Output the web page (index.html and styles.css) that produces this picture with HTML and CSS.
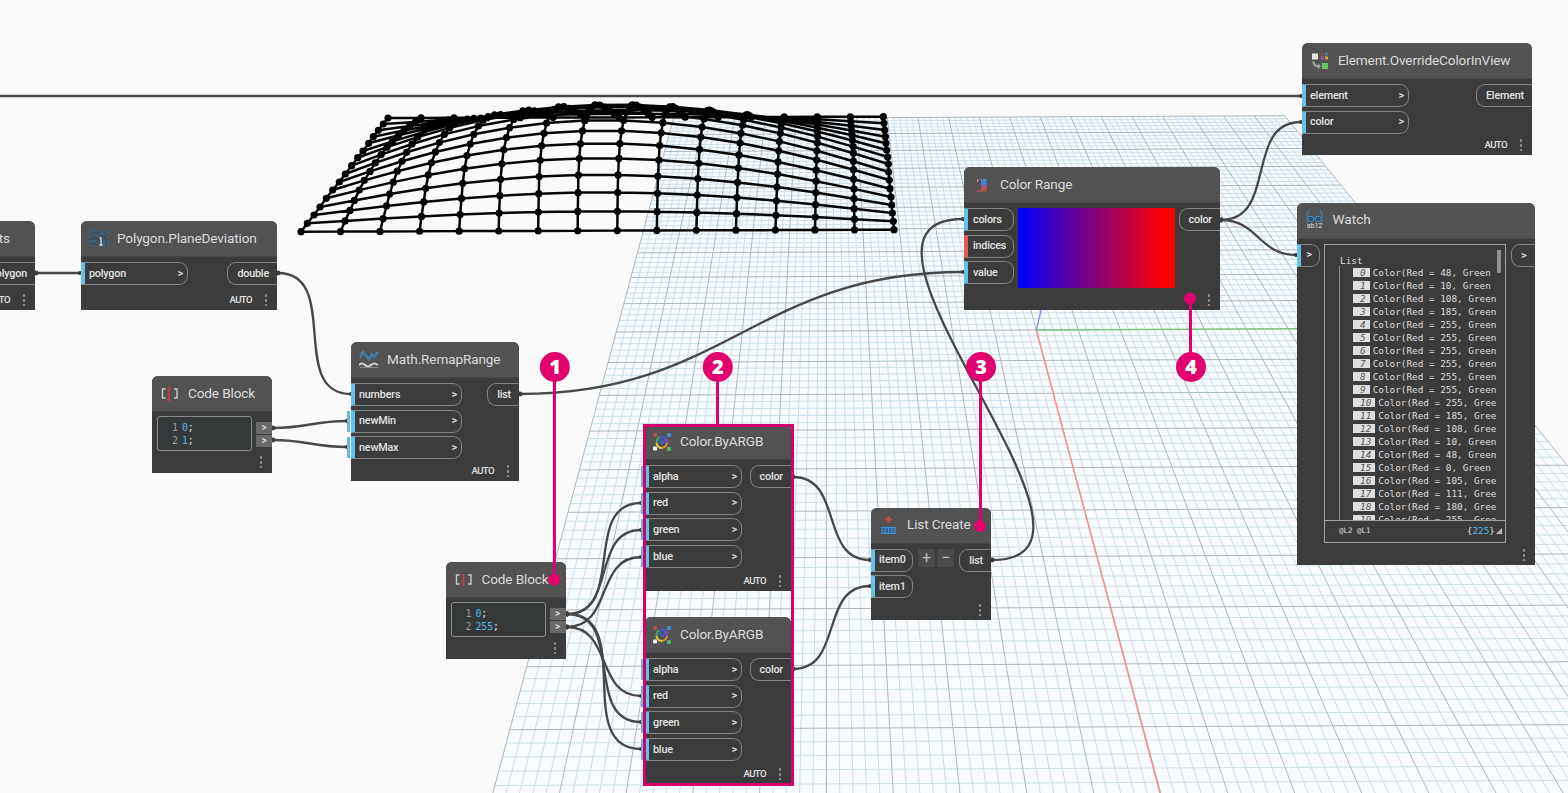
FILE: index.html
```html
<!DOCTYPE html>
<html lang="en">
<head>
<meta charset="utf-8">
<title>Graph workspace</title>
<link rel="stylesheet" href="styles.css">
</head>
<body>
<main class="workspace">
<svg class="layer" width="1568" height="793" viewBox="0 0 1568 793">
  <path id="plane" class="plane"/>
  <path id="minor-across" class="minor across"/>
  <path id="minor-deep" class="minor deep"/>
  <path id="major" class="major"/>
  <path class="axis-x" d="M1036.3 330L1160 793"/>
  <path class="axis-y" d="M1036.3 330L1456 328"/>
  <path class="axis-z" d="M1036.3 330L1046 290"/>
  <path id="mesh-lines" class="mesh-lines"/>
  <path id="mesh-dots" class="mesh-dots"/>
  <g id="wires" class="wires"></g>
</svg>

<section class="node n-points">
  <header><h2>ts</h2></header>
  <div class="ports"><div class="outs"><span class="out">polygon</span></div></div>
  <footer><b>AUTO</b><i class="dots"></i></footer>
</section>

<section class="node n-deviation">
  <header><svg class="icon" viewBox="0 0 20 20"><rect x="1" y="2" width="18" height="15" fill="#43505b" stroke="#38698e" stroke-dasharray="3 1.5"/><path d="M3 7l3-2 3 3 4-4 4 2M2 12h5M15 11v5" fill="none" stroke="#3f7096"/><path d="M12 9v7M10.500 9h2M10.500 16h3" stroke="#ddd" stroke-width="1.3"/></svg><h2>Polygon.PlaneDeviation</h2></header>
  <div class="ports"><div class="ins"><span class="in">polygon<em>&gt;</em></span></div><div class="outs"><span class="out">double</span></div></div>
  <footer><b>AUTO</b><i class="dots"></i></footer>
</section>

<section class="node n-remap">
  <header><svg class="icon" viewBox="0 0 20 20"><path d="M1 8l3-6 3 3 3 5 3-6 2 3 4-5" fill="none" stroke="#4380ae" stroke-width="2"/><path d="M1 3h3M9 7h3M16 3h3" stroke="#4380ae"/><path d="M0 15q3-3 6 0t6 0 7 0" fill="none" stroke="#d0d0d0" stroke-width="2"/><path d="M1 17.500h18" stroke="#8b8b8b"/></svg><h2>Math.RemapRange</h2></header>
  <div class="ports"><div class="ins"><span class="in">numbers<em>&gt;</em></span><span class="in default">newMin<em>&gt;</em></span><span class="in default">newMax<em>&gt;</em></span></div><div class="outs"><span class="out">list</span></div></div>
  <footer><b>AUTO</b><i class="dots"></i></footer>
</section>

<section class="node code n-code1">
  <header><svg class="icon" viewBox="0 0 20 20"><path d="M5.500 5H2.500v9h3M14 5h3v9h-3" fill="none" stroke="#c9c9c9" stroke-width="1.4"/><path d="M7.500 4h3M9 4v12M7.500 16h3" fill="none" stroke="#d23b42" stroke-width="1.5"/></svg><h2>Code Block</h2></header>
  <div class="ports"><pre class="editor"><s>1</s><u>0</u>;
<s>2</s><u>1</u>;</pre><div class="codeouts"><span>&gt;</span><span>&gt;</span></div></div>
  <footer><i class="dots"></i></footer>
</section>

<section class="node code n-code2">
  <header><svg class="icon" viewBox="0 0 20 20"><path d="M5.500 5H2.500v9h3M14 5h3v9h-3" fill="none" stroke="#c9c9c9" stroke-width="1.4"/><path d="M9.500 4v12" fill="none" stroke="#d23b42" stroke-width="1.6"/></svg><h2>Code Block</h2></header>
  <div class="ports"><pre class="editor"><s>1</s><u>0</u>;
<s>2</s><u>255</u>;</pre><div class="codeouts"><span>&gt;</span><span>&gt;</span></div></div>
  <footer><i class="dots"></i></footer>
</section>

<section class="node argb n-argb1">
  <header><svg class="icon" viewBox="0 0 20 20"><rect x="1" y="1" width="4" height="4" rx="1" fill="#b84a4a"/><rect x="15" y="1" width="4" height="4" rx="1" fill="#3f8fd0"/><rect x="1" y="14.500" width="4" height="4" rx="1" fill="#eee"/><rect x="15" y="15" width="4" height="4" rx="1" fill="#52b65a"/><path d="M7 5Q4.500 7 4.500 11" fill="none" stroke="#3fae55" stroke-width="1.800"/><path d="M4.500 11q1 5 5.500 5" fill="none" stroke="#e0c93a" stroke-width="2"/><path d="M10 16q4.500-1 5-5" fill="none" stroke="#dd9a33" stroke-width="2"/><path d="M15 11q0-3-1.500-5" fill="none" stroke="#a540c0" stroke-width="1.800"/><path d="M8 4.500q4-.5 4.500 2t-1.500 5q-3-1-3-6" fill="none" stroke="#375fe0" stroke-width="1.800"/></svg><h2>Color.ByARGB</h2></header>
  <div class="ports"><div class="ins"><span class="in default">alpha<em>&gt;</em></span><span class="in default">red<em>&gt;</em></span><span class="in default">green<em>&gt;</em></span><span class="in default">blue<em>&gt;</em></span></div><div class="outs"><span class="out">color</span></div></div>
  <footer><b>AUTO</b><i class="dots"></i></footer>
</section>

<section class="node argb n-argb2">
  <header><svg class="icon" viewBox="0 0 20 20"><rect x="1" y="1" width="4" height="4" rx="1" fill="#b84a4a"/><rect x="15" y="1" width="4" height="4" rx="1" fill="#3f8fd0"/><rect x="1" y="14.500" width="4" height="4" rx="1" fill="#eee"/><rect x="15" y="15" width="4" height="4" rx="1" fill="#52b65a"/><path d="M7 5Q4.500 7 4.500 11" fill="none" stroke="#3fae55" stroke-width="1.800"/><path d="M4.500 11q1 5 5.500 5" fill="none" stroke="#e0c93a" stroke-width="2"/><path d="M10 16q4.500-1 5-5" fill="none" stroke="#dd9a33" stroke-width="2"/><path d="M15 11q0-3-1.500-5" fill="none" stroke="#a540c0" stroke-width="1.800"/><path d="M8 4.500q4-.5 4.500 2t-1.500 5q-3-1-3-6" fill="none" stroke="#375fe0" stroke-width="1.800"/></svg><h2>Color.ByARGB</h2></header>
  <div class="ports"><div class="ins"><span class="in default">alpha<em>&gt;</em></span><span class="in default">red<em>&gt;</em></span><span class="in default">green<em>&gt;</em></span><span class="in default">blue<em>&gt;</em></span></div><div class="outs"><span class="out">color</span></div></div>
  <footer><b>AUTO</b><i class="dots"></i></footer>
</section>

<section class="node n-list">
  <header><svg class="icon" viewBox="0 0 20 20"><path d="M9.500 1v7M6 4.500h7" stroke="#c94a44" stroke-width="2"/><rect x="3" y="12" width="13" height="6.500" fill="#2f6294"/><path d="M2 12.500h15M2 18.500h15M3 12v6M6.300 12v6M9.600 12v6M12.900 12v6M16 12v6" stroke="#4a8fcd" stroke-width="1"/></svg><h2>List Create</h2></header>
  <div class="ports"><div class="ins"><span class="in">item0</span><span class="in">item1</span></div><div class="stepper"><span>+</span><span>−</span></div><div class="outs"><span class="out">list</span></div></div>
  <footer><i class="dots"></i></footer>
</section>

<section class="node n-range">
  <header><svg class="icon" viewBox="0 0 20 20"><path d="M5 4.500h5M5 16h5" stroke="#d5554f" stroke-width="1.200"/><path d="M5.500 5v2" stroke="#bbb"/><rect x="9" y="4" width="5.500" height="6" fill="#4385c6"/><rect x="9" y="9" width="5.500" height="4" fill="#81629b"/><rect x="9" y="12" width="5.500" height="4.500" fill="#ca4c50"/></svg><h2>Color Range</h2></header>
  <div class="ports"><div class="ins"><span class="in">colors</span><span class="in missing">indices</span><span class="in">value</span></div><div class="ramp"></div><div class="outs"><span class="out">color</span></div></div>
  <footer><i class="dots"></i></footer>
</section>

<section class="node n-override">
  <header><svg class="icon" viewBox="0 0 20 20"><rect x="2" y="2.500" width="6" height="6" fill="#e4e4e4"/><rect x="11" y="1.500" width="3" height="3" fill="#8a4b4b"/><rect x="15" y="1.500" width="3" height="3" fill="#4d7797"/><rect x="11" y="5.500" width="3" height="3" fill="#a0559c"/><rect x="15" y="5.500" width="3" height="3" fill="#c5a73b"/><rect x="12" y="12" width="6" height="6" fill="#62c462"/><path d="M3 10.500q1 5 7 5" fill="none" stroke="#a9a9a9" stroke-width="2"/><path d="M8 12.500l3 3-3 2.500z" fill="#a9a9a9"/></svg><h2>Element.OverrideColorInView</h2></header>
  <div class="ports"><div class="ins"><span class="in">element<em>&gt;</em></span><span class="in">color<em>&gt;</em></span></div><div class="outs"><span class="out">Element</span></div></div>
  <footer><b>AUTO</b><i class="dots"></i></footer>
</section>

<section class="node n-watch">
  <header><svg class="icon" viewBox="0 0 20 20"><path d="M5 1H3.500L2 4v10M14 1h1.500L17 4v10" fill="none" stroke="#3e82ab" stroke-width="1.200"/><rect x="3" y="6.500" width="5.500" height="5" rx="1.500" fill="#35536a" stroke="#4389b8"/><rect x="10.500" y="6.500" width="5.500" height="5" rx="1.500" fill="#35536a" stroke="#4389b8"/><path d="M8 8h3" stroke="#4389b8"/><text x="9.500" y="18" text-anchor="middle" font-family="Roboto, sans-serif" font-size="7" fill="#ddd">ab12</text></svg><h2>Watch</h2></header>
  <div class="ports"><div class="ins"><span class="in"><em>&gt;</em></span></div>
    <div class="viewer"><div class="list"><p>List</p><ol id="values"></ol><i class="thumb"></i></div>
    <div class="levels"><span>@L2 @L1</span><span class="count">{<u>225</u>}<i></i></span></div></div>
    <div class="outs"><span class="out"><em>&gt;</em></span></div></div>
  <footer><i class="dots"></i></footer>
</section>

<svg class="layer callouts" width="1568" height="793" viewBox="0 0 1568 793">
  <rect x="644.500" y="425.500" width="148" height="359" class="frame"/>
  <path class="stems" d="M554.500 367V579M717.500 367V425M980.500 367V526M1190.500 367V299"/>
  <circle cx="554.300" cy="579.500" r="6"/><circle cx="980" cy="526" r="6"/><circle cx="1190" cy="298.500" r="6"/>
  <circle cx="554.800" cy="367" r="15"/><circle cx="717.800" cy="367" r="15"/><circle cx="981" cy="367" r="15"/><circle cx="1191" cy="367" r="15"/>
  <text x="555" y="374">1</text><text x="717.800" y="374">2</text><text x="981" y="374">3</text><text x="1191" y="374">4</text>
</svg>
</main>
<script src="script.js"></script>
</body>
</html>
```
FILE: styles.css
```css
* { box-sizing: border-box; }
body { margin: 0; background: #fafafa; font-family: Roboto, "Noto Sans", sans-serif; overflow: hidden; }
.workspace { position: relative; width: 1568px; height: 793px; overflow: hidden; }
.layer { position: absolute; inset: 0; }
.layer path { fill: none; }
.layer .plane { fill: #f8fcfe; }
.minor { stroke-width: 1; }
.minor.across { stroke: #cbdfea; }
.minor.deep { stroke: #d0dde4; }
.major { stroke: #adb8be; stroke-width: 1; }
.axis-x { stroke: #ff8a8c; stroke-width: 1.5; }
.axis-y { stroke: #7cc576; stroke-width: 1.4; }
.axis-z { stroke: #8f8ff5; stroke-width: 1.4; }
.mesh-lines { stroke: #050505; stroke-width: 2.5; stroke-linejoin: round; }
.layer .mesh-dots { fill: #000; }
.wires { stroke: #484848; stroke-width: 2.3; }
.wires circle { fill: #3c3c3c; stroke: none; }

.node { position: absolute; display: flex; flex-direction: column; background: #3c3c3c; border-radius: 6px 6px 0 0; color: #e2e2e2; }
.node header { display: flex; align-items: center; gap: 8px; height: 36px; flex: none; padding-left: 8px; background: #525252; border-bottom: 1px solid #484848; border-radius: 6px 6px 0 0; }
.icon { width: 20px; height: 20px; flex: none; }
h2 { margin: 0; padding-bottom: 1px; font-size: 13.6px; line-height: 17px; font-weight: 400; letter-spacing: -.14px; color: #dadada; white-space: nowrap; }
.ports { display: flex; padding-top: 5px; min-height: 0; }
.ins, .outs { display: flex; flex-direction: column; gap: 3.7px; flex: none; }
.outs { margin-left: auto; }
.in, .out { display: flex; align-items: center; height: 23px; border: 1px solid #848484; font-size: 10.8px; font-weight: 500; letter-spacing: -.2px; white-space: nowrap; }
.in { position: relative; width: 107px; border-left: 4px solid #66c1ea; border-radius: 0 9px 9px 0; padding: 0 4px 1px 4px; }
.in em, .out em { margin-left: auto; font-style: normal; font-size: 11px; }
.in.missing { border-left-color: #e25a58; }
.in.default::before { content: ""; position: absolute; left: -8px; top: 0; width: 3px; height: 21px; background: #66b8e2; }
.out { border-right: 0; border-radius: 9px 0 0 9px; padding: 0 8px 0 9px; }
.node footer { display: flex; align-items: center; justify-content: flex-end; height: 21px; margin-top: auto; padding: 0 9px 0 0; gap: 12px; }
.node footer b { font-size: 9.6px; font-weight: 500; letter-spacing: -.6px; }
.dots { width: 4px; height: 13px; background: radial-gradient(circle, #878787 1.1px, transparent 1.6px) 0 0 / 4px 5px; }

.n-points { left: -100px; top: 221px; width: 135px; height: 89px; }
.n-points header { justify-content: flex-end; padding-right: 25px; }
.n-deviation { left: 81px; top: 221px; width: 196px; height: 89px; }
.n-remap { left: 351px; top: 342px; width: 168px; height: 139px; }
.n-remap .in { width: 111px; }
.n-code1 { left: 152px; top: 376px; width: 120px; height: 97px; }
.n-code2 { left: 445.500px; top: 562px; width: 120px; height: 97px; }
.n-argb1 { left: 645px; top: 424px; width: 146px; height: 167px; }
.n-argb2 { left: 645px; top: 617px; width: 146px; height: 167px; }
.argb .in { width: 97px; }
.argb header { padding-left: 7px; }
.n-list { left: 871px; top: 507.500px; width: 120px; height: 112px; }
.n-list .in { width: 42px; padding-right: 0; }
.n-range { left: 964px; top: 167px; width: 256px; height: 143px; }
.n-range .in { width: 50px; padding-left: 5px; }
.n-override { left: 1302px; top: 43px; width: 230px; height: 112px; }
.n-watch { left: 1296.500px; top: 202.500px; width: 238px; height: 362px; }
.n-watch .in { width: 23px; padding-left: 3px; }
.n-watch .in em { margin: 0 auto; }
.n-watch .out { width: 24px; }
.n-watch h2 { letter-spacing: 0; }

.editor { width: 95px; height: 35px; margin: 0 0 0 5px; padding: 4px 0 0 14px; border: 1px solid #8d8d8d; border-radius: 3px; background: #35393a; color: #e2e2e2; font: 9.8px/13px "DejaVu Sans Mono", monospace; }
.editor s { text-decoration: none; color: #a0a0a0; margin-right: 4px; }
.editor u, .count u { text-decoration: none; color: #55b9e5; }
.codeouts { display: flex; flex-direction: column; gap: 1px; margin: 6px 0 0 auto; }
.codeouts span { width: 16px; height: 12px; background: #696969; font: 500 10px/12px Roboto, sans-serif; text-align: center; }
.code .ports { padding-top: 4px; }
.code footer { height: 23px; }
.stepper { display: flex; gap: 2px; margin: 0 0 0 5px; }
.stepper span { width: 17px; height: 18px; background: #4b4b4b; color: #bbb; text-align: center; font-size: 16px; line-height: 17px; }
.ramp { width: 157px; height: 80px; margin-left: 4px; background: linear-gradient(90deg, #00f, #f00 93%); }

.viewer { width: 182px; height: 299px; margin-left: 4.5px; border: 1px solid #a2a2a2; font: 9.35px/13px "DejaVu Sans Mono", monospace; color: #dcdcdc; }
.list { position: relative; height: 276px; padding: 10px 9px 0 15px; overflow: hidden; border-bottom: 1px solid #a2a2a2; }
.list p { margin: 0; line-height: 11px; }
.list ol { list-style: none; margin: 0 0 0 -1px; padding: 0 0 0 13px; border-left: 1px solid #909090; height: 270px; overflow: hidden; }
.list li { display: flex; align-items: center; gap: 3px; height: 13.06px; white-space: pre; }
.list li b { flex: none; height: 9px; padding: 0 4px 0 7px; background: #dedede; color: #555; font-style: italic; font-weight: 400; line-height: 9px; }
.thumb { position: absolute; right: 4px; top: 5px; width: 4px; height: 23px; background: #909090; }
.levels { display: flex; justify-content: space-between; align-items: center; height: 20px; padding: 0 3px 0 14px; font-size: 7.5px; }
.count { display: flex; align-items: center; font-size: 9.4px; }
.count i { margin: 1px 0 0 1px; border: 3px solid transparent; border-right-color: #bbb; border-bottom-color: #bbb; }

.callouts circle { fill: #e0006e; }
.callouts .frame { fill: none; stroke: #d6006d; stroke-width: 3; }
.callouts .stems { stroke: #e0006e; stroke-width: 3; }
.callouts text { fill: #fff; font: 800 20px "Open Sans", "Noto Sans", sans-serif; text-anchor: middle; }
```
FILE: script.js
```js
// Ground plane: 20 x 20 major cells in one-point perspective.
const ground = (u, v) => {
  const w = 1 - 0.0374 * v;
  return [(1036.3 + 42 * u - 30.9 * v) / w, (330 - 0.2 * u + 16.9 * v) / w];
};
const seg = (a, b) => `M${a[0].toFixed(1)} ${a[1].toFixed(1)}L${b[0].toFixed(1)} ${b[1].toFixed(1)}`;
const set = (id, d) => document.getElementById(id).setAttribute('d', d);
let major = '', across = '', deep = '';
for (let k = -50; k <= 50; k++) {
  const c = k / 5;
  const h = seg(ground(-10, c), ground(10, c));
  const d = seg(ground(c, -10), ground(c, 10));
  if (k % 5 === 0) major += h + d;
  else { across += h; deep += d; }
}
set('major', major);
set('minor-across', across);
set('minor-deep', deep);
set('plane', 'M' + [ground(-10, -10), ground(10, -10), ground(10, 10), ground(-10, 10)].join('L') + 'Z');

// Vaulted mesh: 16 x 16 vertices, lifted by a product of sines.
const left = [[33,425],[52,400],[72,375],[90,351],[109,325],[128,300],[148,276],[166,252],[185,227],[203,203],[219,183],[236,160],[250,140],[265,121],[280,102],[294,84]];
const right = [[882,419],[880,394],[877,369],[875,345],[873,321],[870,296],[868,270],[866,246],[865,222],[863,201],[860,180],[858,160],[856,140],[854,120],[852,100],[850,80]];
const vertex = (i, j) => {
  const t = j / 15;
  const ax = 290 + left[i][0] / 3, ay = 90 + left[i][1] / 3;
  const bx = 600 + right[i][0] / 3, by = 90 + right[i][1] / 3;
  const peak = i > 10 ? 53 - (i - 10) * 1.2 : 53;
  const lift = peak * Math.sin(Math.PI * i / 15) * Math.sin(Math.PI * t);
  return [ax + (bx - ax) * t + lift * (-0.27 + 0.05 * (j - 7)), ay + (by - ay) * t - lift];
};
let lines = '', dots = '';
for (let i = 0; i < 16; i++) {
  for (let j = 0; j < 16; j++) {
    const p = vertex(i, j);
    if (j < 15) lines += seg(p, vertex(i, j + 1));
    if (i < 15) lines += seg(p, vertex(i + 1, j));
    dots += `M${p[0] - 3.6} ${p[1]}a3.6 3.6 0 1 0 7.2 0a3.6 3.6 0 1 0 -7.2 0`;
  }
}
set('mesh-lines', lines);
set('mesh-dots', dots);

// Connectors between ports.
const wires = [
  [-6,96,1301,96],[36,273,80,273],[278,273,351,394],[273,428,347,421],[273,440,347,447],
  [520,394,963,272],[793,477,870,560],[793,669,870,586],[992,560,963,219],
  [1221,220,1301,122],[1221,220,1296,255],
  [567,614,641,503],[567,614,641,530],[567,627,641,557],
  [567,627,641,696],[567,614,641,722],[567,614,641,749]
];
document.getElementById('wires').innerHTML = wires.map(([a, b, c, d]) => {
  const o = 0.45 * Math.hypot(c - a, d - b);
  return `<path d="M${a} ${b}C${a + o} ${b} ${c - o} ${d} ${c} ${d}"/><circle cx="${a}" cy="${b}" r="2.4"/><circle cx="${c}" cy="${d}" r="2"/>`;
}).join('');

// Watch list rows.
const reds = [48,10,108,185,255,255,255,255,255,255,255,185,108,10,48,0,105,111,180,255];
document.getElementById('values').innerHTML = reds.map((r, n) => {
  const room = n < 10 ? 22 : 21;
  return `<li><b>${n}</b>${`Color(Red = ${r}, Green`.slice(0, room)}</li>`;
}).join('');
```
